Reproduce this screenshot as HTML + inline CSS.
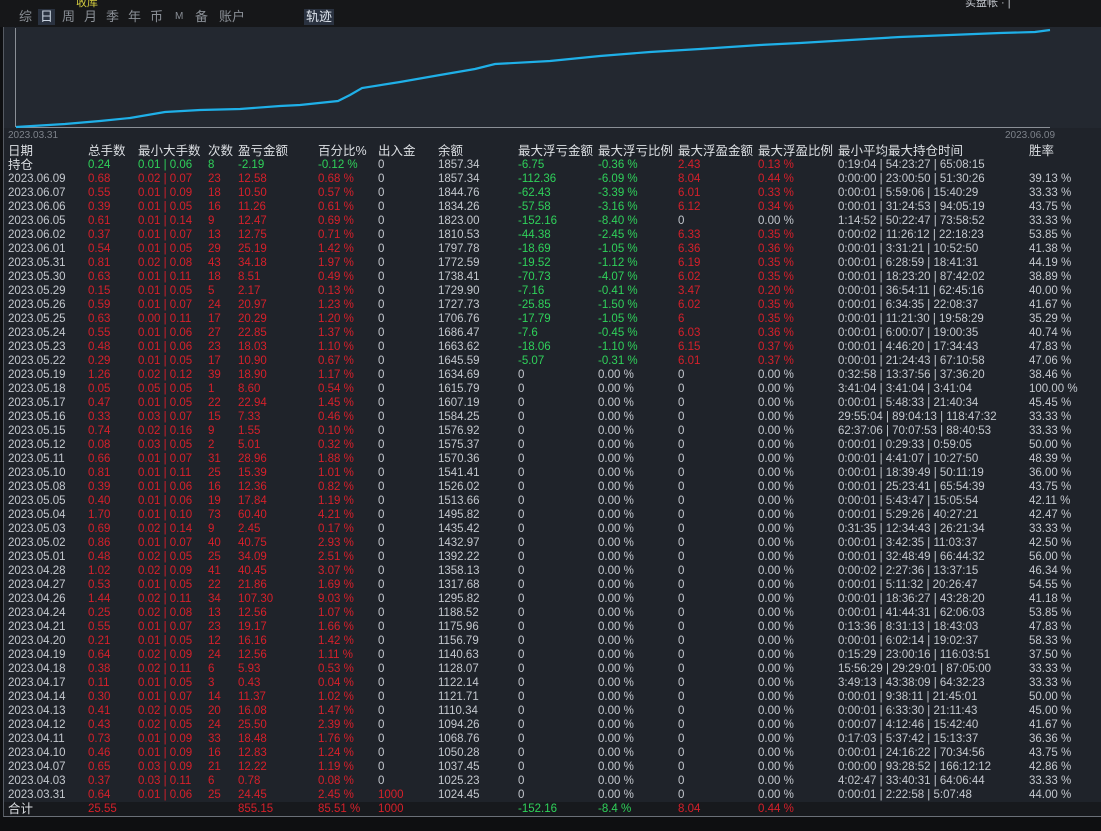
<!DOCTYPE html>
<html><head><meta charset="utf-8"><style>
*{margin:0;padding:0;box-sizing:border-box}
body{width:1101px;height:831px;background:#0e0f11;position:relative;overflow:hidden;font-family:"Liberation Sans","Noto Sans CJK SC",sans-serif;font-size:11.5px;color:#c4c8ce}
#top{position:absolute;left:0;top:0;width:1101px;height:27px;background:#161719}
#main{position:absolute;left:3px;top:27px;width:1098px;height:790px;background:#1f232a;border-left:1px solid #555a62;border-bottom:1px solid #6a6f77}
.tab{position:absolute;top:9px;font-size:13px;color:#8a8f96;line-height:16px}
.tab.on{background:#2a3240;color:#c9d3e0;padding:0 2px}
.r{position:absolute;left:0;width:1101px;height:14px;line-height:14px}
.r span{position:absolute;white-space:nowrap}
.r span:nth-child(1){left:8px}
.r span:nth-child(2){left:88px}
.r span:nth-child(3){left:138px}
.r span:nth-child(4){left:208px}
.r span:nth-child(5){left:238px}
.r span:nth-child(6){left:318px}
.r span:nth-child(7){left:378px}
.r span:nth-child(8){left:438px}
.r span:nth-child(9){left:518px;color:#2fd15a}
.r span:nth-child(10){left:598px;color:#2fd15a}
.r span:nth-child(11){left:678px;color:#d6202a}
.r span:nth-child(12){left:758px;color:#d6202a}
.r span:nth-child(13){left:838px}
.r span:nth-child(14){left:1029px}
.d span:nth-child(2),.d span:nth-child(3),.d span:nth-child(4),.d span:nth-child(5),.d span:nth-child(6){color:#d6202a}
.z span:nth-child(9),.z span:nth-child(10),.z span:nth-child(11),.z span:nth-child(12){color:#c4c8ce}
.h{font-size:12.5px;color:#dcdfe3}
.h span{color:#dcdfe3!important}
.g span:nth-child(2),.g span:nth-child(3),.g span:nth-child(4),.g span:nth-child(5),.g span:nth-child(6){color:#2fd15a}
.t span:nth-child(2),.t span:nth-child(5),.t span:nth-child(6),.t span:nth-child(7){color:#d6202a}
</style></head><body>
<div id="top"></div>
<div style="position:absolute;left:76px;top:-6px;font-size:11px;color:#d8d040">收库</div>
<div style="position:absolute;left:965px;top:-6px;font-size:11px;color:#c4c8ce">实盘帐 · |</div>
<div class="tab" style="left:19px">综</div>
<div class="tab on" style="left:38px">日</div>
<div class="tab" style="left:62px">周</div>
<div class="tab" style="left:84px">月</div>
<div class="tab" style="left:106px">季</div>
<div class="tab" style="left:128px">年</div>
<div class="tab" style="left:150px">币</div>
<div class="tab" style="left:175px;font-size:10px">M</div>
<div class="tab" style="left:195px">备</div>
<div class="tab" style="left:219px">账户</div>
<div class="tab on" style="left:304px;color:#e0e6ee">轨迹</div>
<div id="main"></div>
<svg style="position:absolute;left:0;top:0" width="1101" height="145">
<rect x="4" y="27" width="1097" height="101" fill="#232830"/>
<line x1="15.5" y1="28" x2="15.5" y2="127" stroke="#8a8f96" stroke-width="1"/>
<line x1="16" y1="127.5" x2="1050" y2="127.5" stroke="#8a8f96" stroke-width="1"/>
<polyline fill="none" stroke="#1fb0e8" stroke-width="2.2" points="16,127 65,124 100,121 130,118 165,112 200,110 240,109 280,106 300,105 338,101 350,95 362,88 400,82 440,75 475,69 495,64 550,61 600,56 650,52 700,49 760,45 800,43 850,40 900,37 950,35 1000,33 1035,32 1050,30"/>
<text x="8" y="138" font-family="Liberation Sans" font-size="10" fill="#7d828a">2023.03.31</text>
<text x="1005" y="138" font-family="Liberation Sans" font-size="10" fill="#7d828a">2023.06.09</text>
</svg>
<div class="r h" style="top:144px"><span>日期</span><span>总手数</span><span>最小大手数</span><span>次数</span><span>盈亏金额</span><span>百分比%</span><span>出入金</span><span>余额</span><span>最大浮亏金额</span><span>最大浮亏比例</span><span>最大浮盈金额</span><span>最大浮盈比例</span><span>最小平均最大持仓时间</span><span>胜率</span></div>
<div class="r g" style="top:158px"><span style="font-size:12.5px;color:#dcdfe3">持仓</span><span>0.24</span><span>0.01 | 0.06</span><span>8</span><span>-2.19</span><span>-0.12 %</span><span>0</span><span>1857.34</span><span>-6.75</span><span>-0.36 %</span><span>2.43</span><span>0.13 %</span><span>0:19:04 | 54:23:27 | 65:08:15</span><span></span></div>
<div class="r d" style="top:172px"><span>2023.06.09</span><span>0.68</span><span>0.02 | 0.07</span><span>23</span><span>12.58</span><span>0.68 %</span><span>0</span><span>1857.34</span><span>-112.36</span><span>-6.09 %</span><span>8.04</span><span>0.44 %</span><span>0:00:00 | 23:00:50 | 51:30:26</span><span>39.13 %</span></div>
<div class="r d" style="top:186px"><span>2023.06.07</span><span>0.55</span><span>0.01 | 0.09</span><span>18</span><span>10.50</span><span>0.57 %</span><span>0</span><span>1844.76</span><span>-62.43</span><span>-3.39 %</span><span>6.01</span><span>0.33 %</span><span>0:00:01 | 5:59:06 | 15:40:29</span><span>33.33 %</span></div>
<div class="r d" style="top:200px"><span>2023.06.06</span><span>0.39</span><span>0.01 | 0.05</span><span>16</span><span>11.26</span><span>0.61 %</span><span>0</span><span>1834.26</span><span>-57.58</span><span>-3.16 %</span><span>6.12</span><span>0.34 %</span><span>0:00:01 | 31:24:53 | 94:05:19</span><span>43.75 %</span></div>
<div class="r d" style="top:214px"><span>2023.06.05</span><span>0.61</span><span>0.01 | 0.14</span><span>9</span><span>12.47</span><span>0.69 %</span><span>0</span><span>1823.00</span><span>-152.16</span><span>-8.40 %</span><span style="color:#c4c8ce">0</span><span style="color:#c4c8ce">0.00 %</span><span>1:14:52 | 50:22:47 | 73:58:52</span><span>33.33 %</span></div>
<div class="r d" style="top:228px"><span>2023.06.02</span><span>0.37</span><span>0.01 | 0.07</span><span>13</span><span>12.75</span><span>0.71 %</span><span>0</span><span>1810.53</span><span>-44.38</span><span>-2.45 %</span><span>6.33</span><span>0.35 %</span><span>0:00:02 | 11:26:12 | 22:18:23</span><span>53.85 %</span></div>
<div class="r d" style="top:242px"><span>2023.06.01</span><span>0.54</span><span>0.01 | 0.05</span><span>29</span><span>25.19</span><span>1.42 %</span><span>0</span><span>1797.78</span><span>-18.69</span><span>-1.05 %</span><span>6.36</span><span>0.36 %</span><span>0:00:01 | 3:31:21 | 10:52:50</span><span>41.38 %</span></div>
<div class="r d" style="top:256px"><span>2023.05.31</span><span>0.81</span><span>0.02 | 0.08</span><span>43</span><span>34.18</span><span>1.97 %</span><span>0</span><span>1772.59</span><span>-19.52</span><span>-1.12 %</span><span>6.19</span><span>0.35 %</span><span>0:00:01 | 6:28:59 | 18:41:31</span><span>44.19 %</span></div>
<div class="r d" style="top:270px"><span>2023.05.30</span><span>0.63</span><span>0.01 | 0.11</span><span>18</span><span>8.51</span><span>0.49 %</span><span>0</span><span>1738.41</span><span>-70.73</span><span>-4.07 %</span><span>6.02</span><span>0.35 %</span><span>0:00:01 | 18:23:20 | 87:42:02</span><span>38.89 %</span></div>
<div class="r d" style="top:284px"><span>2023.05.29</span><span>0.15</span><span>0.01 | 0.05</span><span>5</span><span>2.17</span><span>0.13 %</span><span>0</span><span>1729.90</span><span>-7.16</span><span>-0.41 %</span><span>3.47</span><span>0.20 %</span><span>0:00:01 | 36:54:11 | 62:45:16</span><span>40.00 %</span></div>
<div class="r d" style="top:298px"><span>2023.05.26</span><span>0.59</span><span>0.01 | 0.07</span><span>24</span><span>20.97</span><span>1.23 %</span><span>0</span><span>1727.73</span><span>-25.85</span><span>-1.50 %</span><span>6.02</span><span>0.35 %</span><span>0:00:01 | 6:34:35 | 22:08:37</span><span>41.67 %</span></div>
<div class="r d" style="top:312px"><span>2023.05.25</span><span>0.63</span><span>0.00 | 0.11</span><span>17</span><span>20.29</span><span>1.20 %</span><span>0</span><span>1706.76</span><span>-17.79</span><span>-1.05 %</span><span>6</span><span>0.35 %</span><span>0:00:01 | 11:21:30 | 19:58:29</span><span>35.29 %</span></div>
<div class="r d" style="top:326px"><span>2023.05.24</span><span>0.55</span><span>0.01 | 0.06</span><span>27</span><span>22.85</span><span>1.37 %</span><span>0</span><span>1686.47</span><span>-7.6</span><span>-0.45 %</span><span>6.03</span><span>0.36 %</span><span>0:00:01 | 6:00:07 | 19:00:35</span><span>40.74 %</span></div>
<div class="r d" style="top:340px"><span>2023.05.23</span><span>0.48</span><span>0.01 | 0.06</span><span>23</span><span>18.03</span><span>1.10 %</span><span>0</span><span>1663.62</span><span>-18.06</span><span>-1.10 %</span><span>6.15</span><span>0.37 %</span><span>0:00:01 | 4:46:20 | 17:34:43</span><span>47.83 %</span></div>
<div class="r d" style="top:354px"><span>2023.05.22</span><span>0.29</span><span>0.01 | 0.05</span><span>17</span><span>10.90</span><span>0.67 %</span><span>0</span><span>1645.59</span><span>-5.07</span><span>-0.31 %</span><span>6.01</span><span>0.37 %</span><span>0:00:01 | 21:24:43 | 67:10:58</span><span>47.06 %</span></div>
<div class="r d z" style="top:368px"><span>2023.05.19</span><span>1.26</span><span>0.02 | 0.12</span><span>39</span><span>18.90</span><span>1.17 %</span><span>0</span><span>1634.69</span><span>0</span><span>0.00 %</span><span>0</span><span>0.00 %</span><span>0:32:58 | 13:37:56 | 37:36:20</span><span>38.46 %</span></div>
<div class="r d z" style="top:382px"><span>2023.05.18</span><span>0.05</span><span>0.05 | 0.05</span><span>1</span><span>8.60</span><span>0.54 %</span><span>0</span><span>1615.79</span><span>0</span><span>0.00 %</span><span>0</span><span>0.00 %</span><span>3:41:04 | 3:41:04 | 3:41:04</span><span>100.00 %</span></div>
<div class="r d z" style="top:396px"><span>2023.05.17</span><span>0.47</span><span>0.01 | 0.05</span><span>22</span><span>22.94</span><span>1.45 %</span><span>0</span><span>1607.19</span><span>0</span><span>0.00 %</span><span>0</span><span>0.00 %</span><span>0:00:01 | 5:48:33 | 21:40:34</span><span>45.45 %</span></div>
<div class="r d z" style="top:410px"><span>2023.05.16</span><span>0.33</span><span>0.03 | 0.07</span><span>15</span><span>7.33</span><span>0.46 %</span><span>0</span><span>1584.25</span><span>0</span><span>0.00 %</span><span>0</span><span>0.00 %</span><span>29:55:04 | 89:04:13 | 118:47:32</span><span>33.33 %</span></div>
<div class="r d z" style="top:424px"><span>2023.05.15</span><span>0.74</span><span>0.02 | 0.16</span><span>9</span><span>1.55</span><span>0.10 %</span><span>0</span><span>1576.92</span><span>0</span><span>0.00 %</span><span>0</span><span>0.00 %</span><span>62:37:06 | 70:07:53 | 88:40:53</span><span>33.33 %</span></div>
<div class="r d z" style="top:438px"><span>2023.05.12</span><span>0.08</span><span>0.03 | 0.05</span><span>2</span><span>5.01</span><span>0.32 %</span><span>0</span><span>1575.37</span><span>0</span><span>0.00 %</span><span>0</span><span>0.00 %</span><span>0:00:01 | 0:29:33 | 0:59:05</span><span>50.00 %</span></div>
<div class="r d z" style="top:452px"><span>2023.05.11</span><span>0.66</span><span>0.01 | 0.07</span><span>31</span><span>28.96</span><span>1.88 %</span><span>0</span><span>1570.36</span><span>0</span><span>0.00 %</span><span>0</span><span>0.00 %</span><span>0:00:01 | 4:41:07 | 10:27:50</span><span>48.39 %</span></div>
<div class="r d z" style="top:466px"><span>2023.05.10</span><span>0.81</span><span>0.01 | 0.11</span><span>25</span><span>15.39</span><span>1.01 %</span><span>0</span><span>1541.41</span><span>0</span><span>0.00 %</span><span>0</span><span>0.00 %</span><span>0:00:01 | 18:39:49 | 50:11:19</span><span>36.00 %</span></div>
<div class="r d z" style="top:480px"><span>2023.05.08</span><span>0.39</span><span>0.01 | 0.06</span><span>16</span><span>12.36</span><span>0.82 %</span><span>0</span><span>1526.02</span><span>0</span><span>0.00 %</span><span>0</span><span>0.00 %</span><span>0:00:01 | 25:23:41 | 65:54:39</span><span>43.75 %</span></div>
<div class="r d z" style="top:494px"><span>2023.05.05</span><span>0.40</span><span>0.01 | 0.06</span><span>19</span><span>17.84</span><span>1.19 %</span><span>0</span><span>1513.66</span><span>0</span><span>0.00 %</span><span>0</span><span>0.00 %</span><span>0:00:01 | 5:43:47 | 15:05:54</span><span>42.11 %</span></div>
<div class="r d z" style="top:508px"><span>2023.05.04</span><span>1.70</span><span>0.01 | 0.10</span><span>73</span><span>60.40</span><span>4.21 %</span><span>0</span><span>1495.82</span><span>0</span><span>0.00 %</span><span>0</span><span>0.00 %</span><span>0:00:01 | 5:29:26 | 40:27:21</span><span>42.47 %</span></div>
<div class="r d z" style="top:522px"><span>2023.05.03</span><span>0.69</span><span>0.02 | 0.14</span><span>9</span><span>2.45</span><span>0.17 %</span><span>0</span><span>1435.42</span><span>0</span><span>0.00 %</span><span>0</span><span>0.00 %</span><span>0:31:35 | 12:34:43 | 26:21:34</span><span>33.33 %</span></div>
<div class="r d z" style="top:536px"><span>2023.05.02</span><span>0.86</span><span>0.01 | 0.07</span><span>40</span><span>40.75</span><span>2.93 %</span><span>0</span><span>1432.97</span><span>0</span><span>0.00 %</span><span>0</span><span>0.00 %</span><span>0:00:01 | 3:42:35 | 11:03:37</span><span>42.50 %</span></div>
<div class="r d z" style="top:550px"><span>2023.05.01</span><span>0.48</span><span>0.02 | 0.05</span><span>25</span><span>34.09</span><span>2.51 %</span><span>0</span><span>1392.22</span><span>0</span><span>0.00 %</span><span>0</span><span>0.00 %</span><span>0:00:01 | 32:48:49 | 66:44:32</span><span>56.00 %</span></div>
<div class="r d z" style="top:564px"><span>2023.04.28</span><span>1.02</span><span>0.02 | 0.09</span><span>41</span><span>40.45</span><span>3.07 %</span><span>0</span><span>1358.13</span><span>0</span><span>0.00 %</span><span>0</span><span>0.00 %</span><span>0:00:02 | 2:27:36 | 13:37:15</span><span>46.34 %</span></div>
<div class="r d z" style="top:578px"><span>2023.04.27</span><span>0.53</span><span>0.01 | 0.05</span><span>22</span><span>21.86</span><span>1.69 %</span><span>0</span><span>1317.68</span><span>0</span><span>0.00 %</span><span>0</span><span>0.00 %</span><span>0:00:01 | 5:11:32 | 20:26:47</span><span>54.55 %</span></div>
<div class="r d z" style="top:592px"><span>2023.04.26</span><span>1.44</span><span>0.02 | 0.11</span><span>34</span><span>107.30</span><span>9.03 %</span><span>0</span><span>1295.82</span><span>0</span><span>0.00 %</span><span>0</span><span>0.00 %</span><span>0:00:01 | 18:36:27 | 43:28:20</span><span>41.18 %</span></div>
<div class="r d z" style="top:606px"><span>2023.04.24</span><span>0.25</span><span>0.02 | 0.08</span><span>13</span><span>12.56</span><span>1.07 %</span><span>0</span><span>1188.52</span><span>0</span><span>0.00 %</span><span>0</span><span>0.00 %</span><span>0:00:01 | 41:44:31 | 62:06:03</span><span>53.85 %</span></div>
<div class="r d z" style="top:620px"><span>2023.04.21</span><span>0.55</span><span>0.01 | 0.07</span><span>23</span><span>19.17</span><span>1.66 %</span><span>0</span><span>1175.96</span><span>0</span><span>0.00 %</span><span>0</span><span>0.00 %</span><span>0:13:36 | 8:31:13 | 18:43:03</span><span>47.83 %</span></div>
<div class="r d z" style="top:634px"><span>2023.04.20</span><span>0.21</span><span>0.01 | 0.05</span><span>12</span><span>16.16</span><span>1.42 %</span><span>0</span><span>1156.79</span><span>0</span><span>0.00 %</span><span>0</span><span>0.00 %</span><span>0:00:01 | 6:02:14 | 19:02:37</span><span>58.33 %</span></div>
<div class="r d z" style="top:648px"><span>2023.04.19</span><span>0.64</span><span>0.02 | 0.09</span><span>24</span><span>12.56</span><span>1.11 %</span><span>0</span><span>1140.63</span><span>0</span><span>0.00 %</span><span>0</span><span>0.00 %</span><span>0:15:29 | 23:00:16 | 116:03:51</span><span>37.50 %</span></div>
<div class="r d z" style="top:662px"><span>2023.04.18</span><span>0.38</span><span>0.02 | 0.11</span><span>6</span><span>5.93</span><span>0.53 %</span><span>0</span><span>1128.07</span><span>0</span><span>0.00 %</span><span>0</span><span>0.00 %</span><span>15:56:29 | 29:29:01 | 87:05:00</span><span>33.33 %</span></div>
<div class="r d z" style="top:676px"><span>2023.04.17</span><span>0.11</span><span>0.01 | 0.05</span><span>3</span><span>0.43</span><span>0.04 %</span><span>0</span><span>1122.14</span><span>0</span><span>0.00 %</span><span>0</span><span>0.00 %</span><span>3:49:13 | 43:38:09 | 64:32:23</span><span>33.33 %</span></div>
<div class="r d z" style="top:690px"><span>2023.04.14</span><span>0.30</span><span>0.01 | 0.07</span><span>14</span><span>11.37</span><span>1.02 %</span><span>0</span><span>1121.71</span><span>0</span><span>0.00 %</span><span>0</span><span>0.00 %</span><span>0:00:01 | 9:38:11 | 21:45:01</span><span>50.00 %</span></div>
<div class="r d z" style="top:704px"><span>2023.04.13</span><span>0.41</span><span>0.02 | 0.05</span><span>20</span><span>16.08</span><span>1.47 %</span><span>0</span><span>1110.34</span><span>0</span><span>0.00 %</span><span>0</span><span>0.00 %</span><span>0:00:01 | 6:33:30 | 21:11:43</span><span>45.00 %</span></div>
<div class="r d z" style="top:718px"><span>2023.04.12</span><span>0.43</span><span>0.02 | 0.05</span><span>24</span><span>25.50</span><span>2.39 %</span><span>0</span><span>1094.26</span><span>0</span><span>0.00 %</span><span>0</span><span>0.00 %</span><span>0:00:07 | 4:12:46 | 15:42:40</span><span>41.67 %</span></div>
<div class="r d z" style="top:732px"><span>2023.04.11</span><span>0.73</span><span>0.01 | 0.09</span><span>33</span><span>18.48</span><span>1.76 %</span><span>0</span><span>1068.76</span><span>0</span><span>0.00 %</span><span>0</span><span>0.00 %</span><span>0:17:03 | 5:37:42 | 15:13:37</span><span>36.36 %</span></div>
<div class="r d z" style="top:746px"><span>2023.04.10</span><span>0.46</span><span>0.01 | 0.09</span><span>16</span><span>12.83</span><span>1.24 %</span><span>0</span><span>1050.28</span><span>0</span><span>0.00 %</span><span>0</span><span>0.00 %</span><span>0:00:01 | 24:16:22 | 70:34:56</span><span>43.75 %</span></div>
<div class="r d z" style="top:760px"><span>2023.04.07</span><span>0.65</span><span>0.03 | 0.09</span><span>21</span><span>12.22</span><span>1.19 %</span><span>0</span><span>1037.45</span><span>0</span><span>0.00 %</span><span>0</span><span>0.00 %</span><span>0:00:00 | 93:28:52 | 166:12:12</span><span>42.86 %</span></div>
<div class="r d z" style="top:774px"><span>2023.04.03</span><span>0.37</span><span>0.03 | 0.11</span><span>6</span><span>0.78</span><span>0.08 %</span><span>0</span><span>1025.23</span><span>0</span><span>0.00 %</span><span>0</span><span>0.00 %</span><span>4:02:47 | 33:40:31 | 64:06:44</span><span>33.33 %</span></div>
<div class="r d z" style="top:788px"><span>2023.03.31</span><span>0.64</span><span>0.01 | 0.06</span><span>25</span><span>24.45</span><span>2.45 %</span><span style="color:#d6202a">1000</span><span>1024.45</span><span>0</span><span>0.00 %</span><span>0</span><span>0.00 %</span><span>0:00:01 | 2:22:58 | 5:07:48</span><span>44.00 %</span></div>
<div style="position:absolute;left:4px;top:802px;width:1097px;height:14px;background:#17191d"></div>
<div class="r t" style="top:802px"><span style="font-size:12.5px;color:#dcdfe3">合计</span><span>25.55</span><span></span><span></span><span>855.15</span><span>85.51 %</span><span>1000</span><span></span><span>-152.16</span><span>-8.4 %</span><span>8.04</span><span>0.44 %</span><span></span><span></span></div>
</body></html>
